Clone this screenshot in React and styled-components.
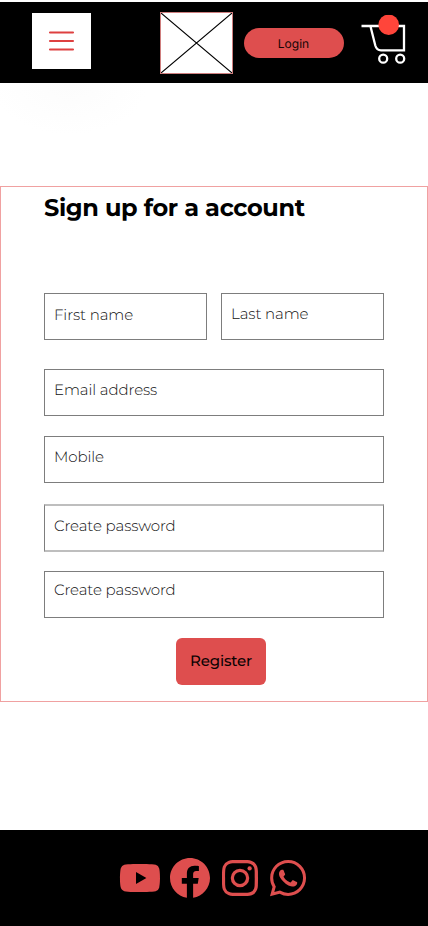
import React from "react";
import styled, { createGlobalStyle } from "styled-components";
import {
  BiLogoYoutube,
  BiLogoFacebookCircle,
  BiLogoInstagram,
  BiLogoWhatsapp,
} from "react-icons/bi";

const GlobalStyle = createGlobalStyle`
  *, *::before, *::after { box-sizing: border-box; }
  body { margin: 0; background: #fff; }
`;

const Page = styled.div`
  display: flex;
  flex-direction: column;
  width: 428px;
  height: 926px;
  padding-top: 2px;
  overflow: hidden;
  background: #fff;
  font-family: "Montserrat", "Inter", sans-serif;
  text-rendering: geometricPrecision;
`;

const Header = styled.header`
  display: flex;
  align-items: flex-start;
  flex: none;
  height: 81px;
  padding: 10px 0 0 32px;
  background: #000;
`;

const MenuButton = styled.button`
  display: flex;
  width: 59px;
  height: 56px;
  margin: 1px 69px 0 0;
  padding: 0;
  border: 0;
  background: #fff;
`;

const LogoBox = styled.div`
  display: flex;
  width: 73px;
  height: 62px;
  margin-right: 11px;
  border: 1px solid #cf7e7e;
  background: #fff;
`;

const LoginButton = styled.button`
  width: 100px;
  height: 30px;
  margin: 16px 17px 0 0;
  padding: 1px 1px 0 0;
  border: 0;
  border-radius: 15px;
  background: #de4e4e;
  color: #160505;
  font: 400 12px/29px "Inter", sans-serif;
  text-rendering: geometricPrecision;
`;

const Cart = styled.svg`
  flex: none;
  margin-top: 1px;
`;

const Main = styled.main`
  display: flex;
  flex: 1;
  flex-direction: column;
  padding-top: 103px;
  background: radial-gradient(ellipse 78px 50px at 70px 2px, #fcfcfc, #fff);
`;

const SignupForm = styled.form`
  display: flex;
  flex-direction: column;
  height: 516px;
  padding: 0 43px;
  border: 1px solid #f0a1a1;
  background: #fff;
`;

const Title = styled.h1`
  margin: 7px 0 69px;
  height: 30px;
  color: #000;
  font-size: 24px;
  font-weight: 700;
  line-height: 30px;
  letter-spacing: -0.36px;
  white-space: nowrap;
`;

const NameRow = styled.div`
  display: grid;
  grid-template-columns: 163px 163px;
  gap: 14px;
  margin-bottom: 29px;
`;

const Field = styled.div`
  height: ${(p) => p.$height || 47}px;
  margin-bottom: ${(p) => p.$gap || 0}px;
  padding: ${(p) => p.$top || 11}px 0 0 9px;
  border: 1px solid #7d7d7d;
  ${(p) => p.$soft && "border-width: 2px 1px; border-top-color: #bebebe; border-bottom-color: #bebebe;"}
  color: #101010;
  font-size: 15px;
  font-weight: 300;
  line-height: 20px;
  letter-spacing: -0.1px;
  white-space: nowrap;
`;

const RegisterButton = styled.button`
  width: 90px;
  height: 47px;
  margin-left: 132px;
  padding: 0 0 2px;
  border: 0;
  border-radius: 6px;
  background: #de4e4e;
  color: #0b0303;
  font-family: inherit;
  font-size: 15px;
  font-weight: 500;
  line-height: 20px;
  letter-spacing: -0.2px;
  text-rendering: geometricPrecision;
`;

const Footer = styled.footer`
  display: flex;
  align-items: flex-start;
  flex: none;
  height: 96px;
  padding: 24px 0 0 116px;
  background: #000;
  color: #de4e4e;
`;

const SocialLink = styled.span`
  display: flex;
  width: 48px;
  height: 48px;
  margin-right: ${(p) => p.$gap || 0}px;
`;

export default function App() {
  return (
    <>
      <GlobalStyle />
      <Page>
        <Header>
          <MenuButton type="button" aria-label="Menu">
            <svg width="59" height="56" viewBox="0 0 59 56" fill="none" stroke="#de4040" strokeWidth="2.1" strokeLinecap="round">
              <path d="M18 19.5H41M18 28H41M18 36.5H41" />
            </svg>
          </MenuButton>
          <LogoBox>
            <svg width="71" height="60" viewBox="0 0 71 60" stroke="#000" strokeWidth="1.1">
              <path d="M0 0L71 60M71 0L0 60" />
            </svg>
          </LogoBox>
          <LoginButton type="button">Login</LoginButton>
          <Cart width="48" height="52" viewBox="361 13 48 52" fill="none" stroke="#fff" strokeWidth="2.3">
            <path d="M361.5 26H404V50.3H381C377.5 50.3 376.2 48.7 375.3 45.5L370.4 26" />
            <circle cx="383.2" cy="58.7" r="4" />
            <circle cx="400.2" cy="58.7" r="4" />
            <circle cx="388.7" cy="24.8" r="10.3" fill="#ff453a" stroke="none" />
            <path d="M376 14H402" stroke="#000" strokeWidth="1.8" />
          </Cart>
        </Header>
        <Main>
          <SignupForm>
            <Title>Sign up for a account</Title>
            <NameRow>
              <Field>First name</Field>
              <Field $top={10.4}>Last name</Field>
            </NameRow>
            <Field $top={10.4} $gap={20}>Email address</Field>
            <Field $top={10.4} $gap={21}>Mobile</Field>
            <Field $top={10} $height={48} $gap={19} $soft>Create password</Field>
            <Field $top={8} $gap={20}>Create password</Field>
            <RegisterButton type="button">Register</RegisterButton>
          </SignupForm>
        </Main>
        <Footer>
          <SocialLink $gap={2}><BiLogoYoutube size={48} /></SocialLink>
          <SocialLink $gap={2}><BiLogoFacebookCircle size={48} /></SocialLink>
          <SocialLink><BiLogoInstagram size={48} /></SocialLink>
          <SocialLink><BiLogoWhatsapp size={48} /></SocialLink>
        </Footer>
      </Page>
    </>
  );
}
